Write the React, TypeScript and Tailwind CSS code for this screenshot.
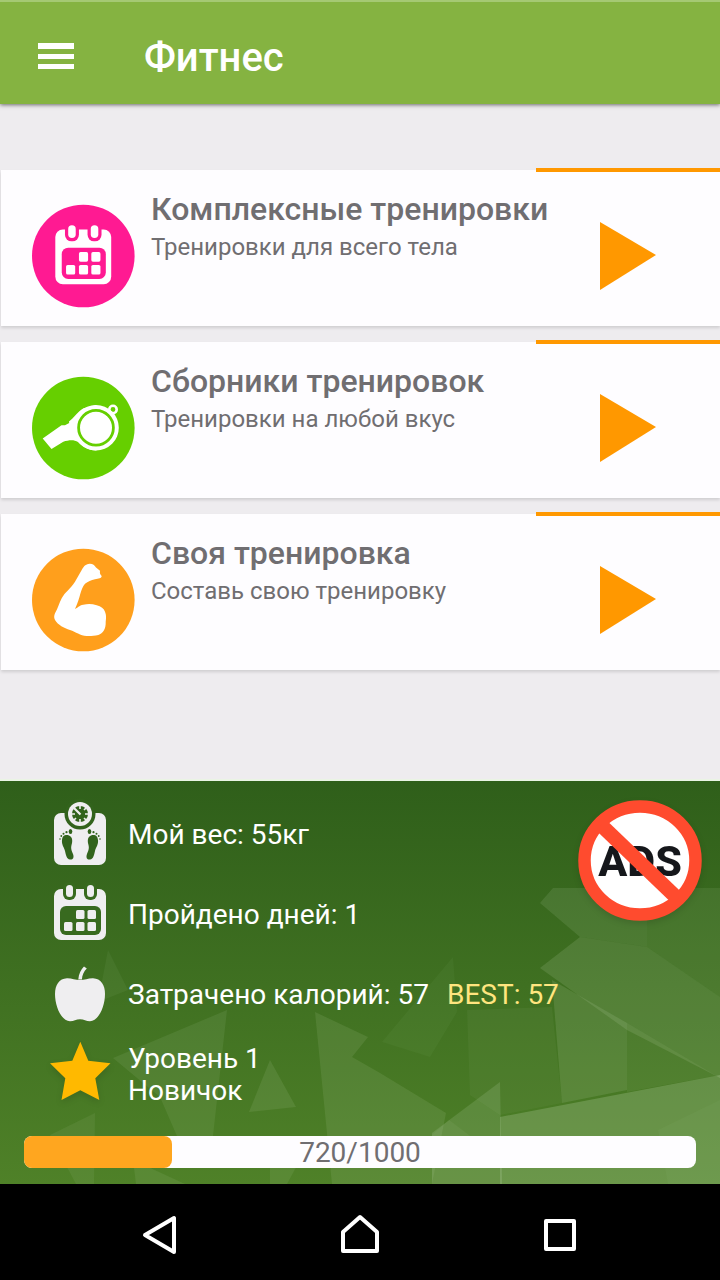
import type { ReactNode } from 'react'

function CalendarGlyph({ cut, fill }: { cut: string; fill: string }) {
  return (
    <g>
      <rect x="4" y="6" width="52" height="51" rx="7" fill={fill} />
      <rect x="13" y="-1" width="13" height="18" rx="6" fill={cut} />
      <rect x="34" y="-1" width="13" height="18" rx="6" fill={cut} />
      <rect x="16" y="2" width="7" height="12" rx="3.5" fill={fill} />
      <rect x="37" y="2" width="7" height="12" rx="3.5" fill={fill} />
      <rect x="10" y="23" width="41" height="29" rx="6" fill={cut} />
      <g fill={fill}>
        <rect x="26" y="27" width="8.5" height="9" rx="1.5" />
        <rect x="37.5" y="27" width="8.5" height="9" rx="1.5" />
        <rect x="14" y="39" width="8.5" height="9" rx="1.5" />
        <rect x="26" y="39" width="8.5" height="9" rx="1.5" />
        <rect x="37.5" y="39" width="8.5" height="9" rx="1.5" />
      </g>
    </g>
  )
}

function WhistleGlyph() {
  return (
    <g>
      <circle cx="82" cy="33.5" r="3.7" fill="none" stroke="#fff" strokeWidth="2.6" />
      <path
        d="M11.7 62.5 30.5 49.2 34 49.2 38.2 47 38 45.5C43 42 46 36 52.5 32.3L65 29 70 71.5 65 74.5C57 74.5 50 69.5 47 66 43 63.5 38 64 32.3 65.7L20.5 73Z"
        fill="#fff"
      />
      <circle cx="65" cy="51.7" r="22.8" fill="#fff" />
      <circle cx="65" cy="51.7" r="17.4" fill="none" stroke="#66cf00" strokeWidth="2.8" />
    </g>
  )
}

function ArmGlyph() {
  return (
    <path
      d="M50.7 22C53 17.5 55.5 16.2 58.5 15.8 61.5 15.6 63.5 17 65 19.5L69 22.7C68.5 25 69.5 27 70.7 28 70.5 30.5 67.5 30.5 64 31.3 60 32.3 57 33.5 54 35.8 49 42 50 48 44 61 46.5 60 48 57.5 52.3 56.7 57 55.8 61 55.8 65.7 57.3 70 58.6 73 60.5 74 63.7 75.4 67 75.2 70 74.7 73.7 75 81 72 85.5 67.3 87 63 88 59 88.2 55.7 88 49 87.6 45 84 39 82 33 80 27 77 24 72 22.8 69.5 23 68 24 65.3 27 60 28 55.5 30.7 50.3 34 44 39.5 41 44 33.7Z"
      fill="#fff"
    />
  )
}

function ScaleGlyph() {
  return (
    <g>
      <rect x="4" y="10" width="52" height="52" rx="7" fill="#efeef0" />
      <circle cx="30" cy="11" r="15.5" fill="#32631c" />
      <circle cx="30" cy="11" r="12" fill="#efeef0" />
      <circle cx="30" cy="11" r="8" fill="#32631c" />
      <path
        d="M30 2V6M30 16V20M21 11H25M35 11H39M36.500 4.500 34 7M23.500 17.500 26 15M36.500 17.500 34 15"
        stroke="#efeef0"
        strokeWidth="1.6"
      />
      <path d="M23.500 4.500 30.500 11.500" stroke="#efeef0" strokeWidth="2.2" />
      <g fill="#32631c">
        <path d="M12 37C12.500 32 16 31.500 19 32.500 23 34 22.500 39 21.500 42 20.500 46 22 48 23 51 24.500 55 22.500 57 20 56.500 16.500 56 16 52 15 48 14 44 11.500 42 12 37Z" />
        <path d="M48 37C47.500 32 44 31.500 41 32.500 37 34 37.500 39 38.500 42 39.500 46 38 48 37 51 35.500 55 37.500 57 40 56.500 43.500 56 44 52 45 48 46 44 48.500 42 48 37Z" />
        <ellipse cx="20.500" cy="28.500" rx="1.800" ry="2.500" />
        <circle cx="16.500" cy="29.200" r="1.100" />
        <circle cx="13.500" cy="30.800" r="1" />
        <circle cx="11.300" cy="33" r="0.900" />
        <circle cx="10" cy="36" r="0.800" />
        <ellipse cx="39.500" cy="28.500" rx="1.800" ry="2.500" />
        <circle cx="43.500" cy="29.200" r="1.100" />
        <circle cx="46.500" cy="30.800" r="1" />
        <circle cx="48.700" cy="33" r="0.900" />
        <circle cx="50" cy="36" r="0.800" />
      </g>
    </g>
  )
}

function AppleGlyph() {
  return (
    <g fill="#efeef0">
      <path d="M5 31C5 22 9 15.500 17 15.200 22 15.100 25 17 30 17 35 17 38 15.100 43 15.200 51 15.500 55 22 55 31 55 43 49 58 40 58.200 36 58.200 34 56.200 30 56.200 26 56.200 24 58.200 20 58.200 11 58 5 43 5 31Z" />
      <path d="M28.300 16.500C28.700 11 31 6.500 34 3.500L36.800 5.500C33.800 8.500 32.200 12 31.900 16.500Z" />
    </g>
  )
}

function StarGlyph() {
  return (
    <path
      className="drop-shadow-md"
      d="M30.300 -1.300 38.300 17.700 60.500 20.300 45.300 35.300 49.300 57 30.300 47.300 11.500 57 15.300 35.300 0 20.300 22.300 17.700Z"
      fill="#ffb900"
    />
  )
}

const WORKOUTS = [
  {
    title: 'Комплексные тренировки',
    subtitle: 'Тренировки для всего тела',
    color: '#ff1a92',
    glyph: (
      <g transform="translate(20 19) scale(1.075)">
        <CalendarGlyph cut="#ff1a92" fill="#fff" />
      </g>
    ),
  },
  {
    title: 'Сборники тренировок',
    subtitle: 'Тренировки на любой вкус',
    color: '#66cf00',
    glyph: <WhistleGlyph />,
  },
  {
    title: 'Своя тренировка',
    subtitle: 'Составь свою тренировку',
    color: '#ff9f1c',
    glyph: <ArmGlyph />,
  },
]

function WorkoutCard({ title, subtitle, color, glyph }: (typeof WORKOUTS)[number]) {
  return (
    <li className="relative flex h-[156px] items-start bg-[#fefdff] pl-[30px] pr-16 shadow-[0_2px_3px_rgba(0,0,0,0.13)]">
      <span className="absolute -top-0.5 right-0 h-1 w-46 bg-[#ff9800]" />
      <svg viewBox="0 0 104 104" className="mt-[34px] size-[104px] shrink-0" aria-hidden="true">
        <circle cx="52.3" cy="52" r="51.3" fill={color} />
        {glyph}
      </svg>
      <div className="ml-4 mt-5 flex-1 whitespace-nowrap text-[#706e71]">
        <h2 className="text-[32px] leading-[38px] font-medium">{title}</h2>
        <p className="text-2xl leading-[38px]">{subtitle}</p>
      </div>
      <button className="mt-[50px] shrink-0" aria-label={title}>
        <svg viewBox="0 0 56 70" className="h-[70px] w-14" aria-hidden="true">
          <path d="M0 2 56 35 0 70Z" fill="#ff9800" />
        </svg>
      </button>
    </li>
  )
}

function StatRow({ icon, children }: { icon: ReactNode; children: ReactNode }) {
  return (
    <li className="flex h-20 items-center gap-[18px]">
      <svg viewBox="0 0 60 64" className="h-16 w-[60px] shrink-0 overflow-visible" aria-hidden="true">
        {icon}
      </svg>
      <div className="text-[28px] leading-8">{children}</div>
    </li>
  )
}

function PanelBackdrop() {
  return (
    <svg
      viewBox="0 781 720 403"
      preserveAspectRatio="none"
      className="absolute inset-0 size-full"
      aria-hidden="true"
    >
      <g fill="#b9d2a6" fillOpacity="0.11">
        <path d="M540 903 553 888H720V997L647 947 580 937Z" />
        <path d="M540 903 580 937 647 947V888H553Z" fillOpacity="0.04" />
        <path d="M540 968 580 937 647 947 720 997V1078L627 1030Z" fillOpacity="0.17" />
        <path d="M552 980 627 1023V1090L562 1103Z" fillOpacity="0.17" />
        <path d="M627 1023 720 1078V1075L627 1092Z" fillOpacity="0.09" />
        <path d="M467 1010 552 1007 562 1103 500 1115 470 1095Z" fillOpacity="0.06" />
        <path d="M453 957 457 1012 430 1057 382 1042Z" fillOpacity="0.05" />
        <path d="M500 1117 720 1075V1184H500Z" fillOpacity="0.27" />
        <path d="M500 1082 502 1184H432V1133Z" fillOpacity="0.18" />
        <path d="M315 1012 368 1037 352 1057 380 1073 446 1113 432 1184H332Z" fillOpacity="0.13" />
        <path d="M449 1120 502 1160V1184H432V1135Z" fillOpacity="0.08" />
        <path d="M113 1058 227 1010 213 1136H177L160 1097Z" />
        <path d="M270 1060 249 1112 296 1107Z" fillOpacity="0.13" />
        <path d="M108 950 128 990 98 1002Z" fillOpacity="0.07" />
        <path d="M50 1135 95 1113 94 1184H76Z" fillOpacity="0.09" />
        <path d="M133 1160 185 1184H136Z" />
        <path d="M270 1160H300L287 1184H270Z" />
        <path d="M658 1130 720 1100V1184H668Z" fillOpacity="0.05" />
      </g>
    </svg>
  )
}

function NavButton({ label, children }: { label: string; children: ReactNode }) {
  return (
    <button aria-label={label} className="flex flex-1 items-center justify-center">
      <svg
        viewBox="0 0 48 48"
        className="size-12"
        fill="none"
        stroke="#fff"
        strokeWidth="4"
        strokeLinejoin="round"
        aria-hidden="true"
      >
        {children}
      </svg>
    </button>
  )
}

export default function App() {
  const points = 720
  const fill = 22

  return (
    <div className="flex min-h-screen flex-col bg-[#eeecef] font-[Roboto,sans-serif]">
      <header className="relative flex h-[104px] items-center border-t-2 border-[#a5c973] bg-[#85b341] pt-1.5 pl-[38px] shadow-[0_1px_4px_rgba(0,0,0,0.55)]">
        <button aria-label="Меню">
          <svg viewBox="0 0 36 26" className="h-[26px] w-9" fill="#fff" aria-hidden="true">
            <path d="M0 0H36V6H0ZM0 11H36V16H0ZM0 21H36V26H0Z" />
          </svg>
        </button>
        <h1 className="mt-1 ml-[70px] text-[40px] leading-[48px] font-medium text-white">Фитнес</h1>
      </header>

      <main className="flex-1 pt-[66px]">
        <ul className="flex flex-col gap-4 pl-px">
          {WORKOUTS.map((w) => (
            <WorkoutCard key={w.title} {...w} />
          ))}
        </ul>
      </main>

      <section className="relative border-t-2 border-[#eaf4e4] bg-linear-to-b from-[#2f5f1a] to-[#4f8128] px-6 pt-3.5 pb-4 text-white">
        <PanelBackdrop />
        <ul className="relative pl-[26px]">
          <StatRow icon={<ScaleGlyph />}>Мой вес: 55кг</StatRow>
          <StatRow icon={<CalendarGlyph cut="#386a1f" fill="#efeef0" />}>Пройдено дней: 1</StatRow>
          <StatRow icon={<AppleGlyph />}>
            Затрачено калорий: 57
            <span className="ml-[18px] text-[#ffe57f]">BEST: 57</span>
          </StatRow>
          <StatRow icon={<StarGlyph />}>
            <p>Уровень 1</p>
            <p>Новичок</p>
          </StatRow>
        </ul>
        <button aria-label="Отключить рекламу" className="absolute top-4 right-4">
          <svg viewBox="0 0 128 128" className="size-32 drop-shadow-md" aria-hidden="true">
            <ellipse cx="64" cy="63.5" rx="55.5" ry="54" fill="#fff" stroke="#ff4b2e" strokeWidth="12.5" />
            <text x="64" y="79" textAnchor="middle" fontSize="43" fontWeight="800" fill="#15171b">
              ADS
            </text>
            <path d="M25 28 102 102" stroke="#ff4b2e" strokeWidth="14.5" />
          </svg>
        </button>
        <div
          role="progressbar"
          aria-label="Уровень"
          aria-valuenow={points}
          aria-valuemax={1000}
          className="relative mt-[21px] h-8 rounded-lg bg-[#fefdff]"
        >
          <div className="h-full rounded-lg bg-[#ffa61f]" style={{ width: `${fill}%` }} />
          <span className="absolute inset-x-0 top-0 text-center text-[28px] leading-[34px] text-[#706e71]">
            {points}/1000
          </span>
        </div>
      </section>

      <nav className="flex h-24 bg-black px-[60px] pt-1.5">
        <NavButton label="Назад">
          <path d="M9 24 38 7V41Z" />
        </NavButton>
        <NavButton label="Домой">
          <path d="M24 6 41 21V40H7V21Z" />
        </NavButton>
        <NavButton label="Недавние">
          <path d="M10 10H38V38H10Z" />
        </NavButton>
      </nav>
    </div>
  )
}
